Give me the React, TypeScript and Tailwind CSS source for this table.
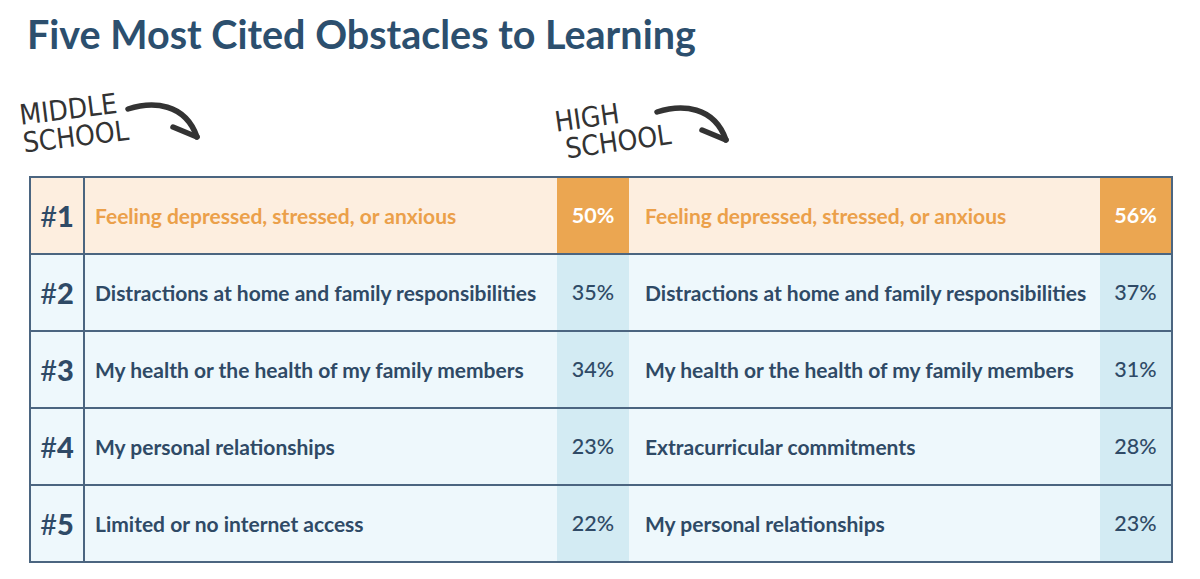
import React from "react";

type Row = { n: number; ms: string; msp: string; hs: string; hsp: string };

const rows: Row[] = [
  { n: 1, ms: "Feeling depressed, stressed, or anxious", msp: "50%", hs: "Feeling depressed, stressed, or anxious", hsp: "56%" },
  { n: 2, ms: "Distractions at home and family responsibilities", msp: "35%", hs: "Distractions at home and family responsibilities", hsp: "37%" },
  { n: 3, ms: "My health or the health of my family members", msp: "34%", hs: "My health or the health of my family members", hsp: "31%" },
  { n: 4, ms: "My personal relationships", msp: "23%", hs: "Extracurricular commitments", hsp: "28%" },
  { n: 5, ms: "Limited or no internet access", msp: "22%", hs: "My personal relationships", hsp: "23%" },
];

function Arrow() {
  return (
    <svg width="80" height="42" viewBox="0 0 80 42" fill="none">
      <path d="M3 9 C 28 1, 60 3, 72 37" stroke="#333333" strokeWidth="5.5" strokeLinecap="round" />
      <path d="M72 37 L 48 27" stroke="#333333" strokeWidth="5.5" strokeLinecap="round" />
    </svg>
  );
}

const hand = { fontFamily: "'DejaVu Sans Condensed', 'DejaVu Sans', sans-serif", fontWeight: 400 } as const;

export default function App() {
  return (
    <div className="w-[1200px] h-[579px] bg-white overflow-hidden" style={{ fontFamily: "Lato, 'Noto Sans', sans-serif" }}>
      <div className="pt-[11px] pl-[27px] text-[39.5px] leading-[46px] font-bold text-[#2c4f6e]">
        Five Most Cited Obstacles to Learning
      </div>
      <div className="flex h-[119px] items-start">
        <div className="ml-[18px] w-[535px] flex items-start">
          <div
            className="mt-[45px] w-[107px] text-[28px] leading-[28px] text-[#333333] -rotate-[7deg] origin-top-left"
            style={hand}
          >
            <div>MIDDLE</div>
            <div>SCHOOL</div>
          </div>
          <div className="mt-[43px]">
            <Arrow />
          </div>
        </div>
        <div className="flex items-start">
          <div
            className="mt-[52px] w-[101px] text-[28px] leading-[28px] text-[#333333] -rotate-[8deg] origin-top-left"
            style={hand}
          >
            <div>HIGH</div>
            <div className="pl-[7px]">SCHOOL</div>
          </div>
          <div className="mt-[46px]">
            <Arrow />
          </div>
        </div>
      </div>
      <div className="ml-[29px] w-[1144px] border-2 border-[#4b6580]">
        {rows.map((r, i) => {
          const first = i === 0;
          const last = i === rows.length - 1;
          return (
            <div
              key={r.n}
              className={
                "flex " +
                (last ? "h-[75px] " : "h-[77px] border-b-2 border-[#4b6580] ") +
                (first ? "bg-[#fdeedf]" : "bg-[#eef8fc]")
              }
            >
              <div className="w-[54px] border-r-2 border-[#4b6580] flex items-center justify-center text-[#2f4a66] text-[29px]">
                <span className="font-normal">#</span>
                <span className="font-black">{r.n}</span>
              </div>
              <div
                className={
                  "w-[472px] flex items-center pl-[10px] text-[21px] font-bold " +
                  (first ? "text-[#eba04a]" : "text-[#2f4a66]")
                }
              >
                {r.ms}
              </div>
              <div
                className={
                  "w-[72px] flex items-center justify-center text-[21.5px] " +
                  (first ? "bg-[#eba651] text-white font-bold" : "bg-[#d3ebf3] text-[#2f4a66] font-medium")
                }
              >
                {r.msp}
              </div>
              <div
                className={
                  "w-[471px] flex items-center pl-[16px] text-[21px] font-bold " +
                  (first ? "text-[#eba04a]" : "text-[#2f4a66]")
                }
              >
                {r.hs}
              </div>
              <div
                className={
                  "w-[71px] flex items-center justify-center text-[21.5px] " +
                  (first ? "bg-[#eba651] text-white font-bold" : "bg-[#d3ebf3] text-[#2f4a66] font-medium")
                }
              >
                {r.hsp}
              </div>
            </div>
          );
        })}
      </div>
    </div>
  );
}
